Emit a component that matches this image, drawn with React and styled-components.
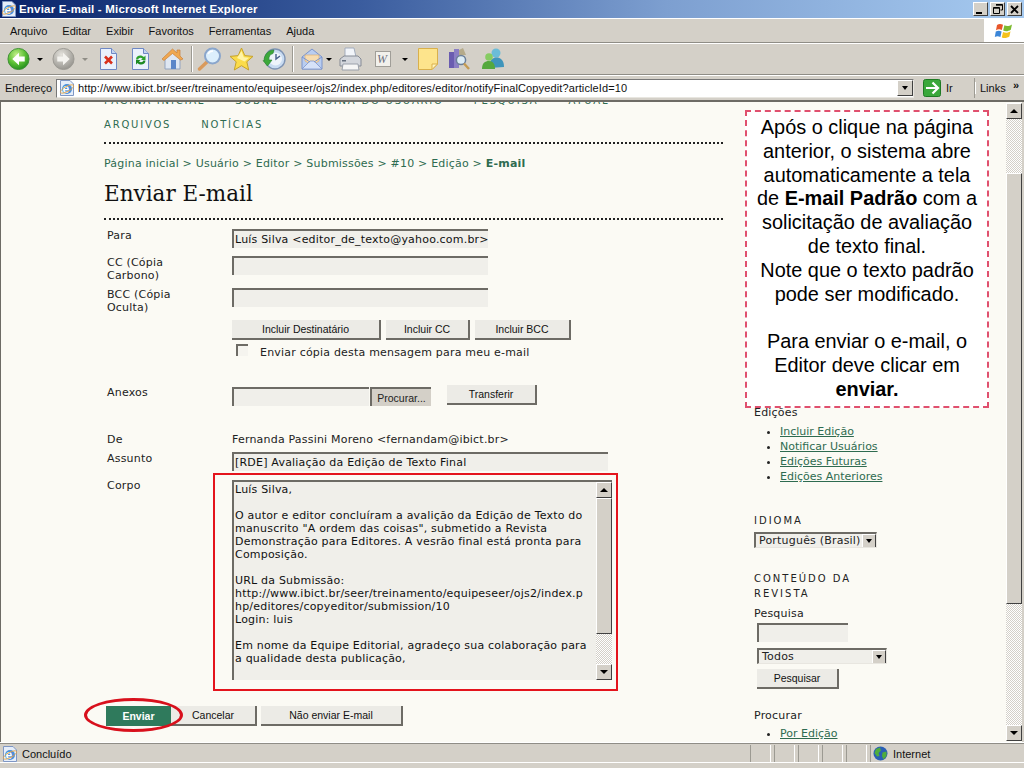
import React from "react";
import styled, { createGlobalStyle } from "styled-components";

const GlobalStyle = createGlobalStyle`
  html, body {
    margin: 0;
    padding: 0;
    overflow: hidden;
  }
`;

const chrome = "#d4d0c8";
const uiFont = `"Liberation Sans", Arial, sans-serif`;
const pageFont = `"DejaVu Sans", Verdana, sans-serif`;

const BackIcon = () => (
  <svg width="23" height="24" viewBox="0 0 24 24">
    <defs>
      <radialGradient id="bk" cx="40%" cy="30%" r="75%">
        <stop offset="0" stopColor="#c4f08c" />
        <stop offset="0.55" stopColor="#5cc034" />
        <stop offset="1" stopColor="#1f8a1c" />
      </radialGradient>
    </defs>
    <circle cx="12" cy="12" r="11" fill="url(#bk)" stroke="#3f8f34" />
    <path d="M12.5 5.5 L5.5 12 L12.5 18.5 V14.6 H18.5 V9.4 H12.5 Z" fill="#fff" />
  </svg>
);

const ForwardIcon = () => (
  <svg width="23" height="24" viewBox="0 0 24 24">
    <defs>
      <radialGradient id="fw" cx="40%" cy="30%" r="75%">
        <stop offset="0" stopColor="#e4e2dc" />
        <stop offset="1" stopColor="#93918b" />
      </radialGradient>
    </defs>
    <circle cx="12" cy="12" r="11" fill="url(#fw)" stroke="#9b9992" />
    <path d="M11.5 5.5 L18.5 12 L11.5 18.5 V14.6 H5.5 V9.4 H11.5 Z" fill="#f4f3ef" />
  </svg>
);

const StopIcon = () => (
  <svg width="19" height="24" viewBox="0 0 19 24">
    <path d="M1.5 1.5H12.5L17.5 6.5V22.5H1.5Z" fill="#eaf1fc" stroke="#6f88c4" />
    <path d="M12.5 1.5V6.5H17.5" fill="#c4d4f0" stroke="#6f88c4" />
    <path d="M6 9.5L13 16.5M13 9.5L6 16.5" stroke="#d8301c" strokeWidth="2.6" />
  </svg>
);

const RefreshIcon = () => (
  <svg width="19" height="24" viewBox="0 0 19 24">
    <path d="M1.5 1.5H12.5L17.5 6.5V22.5H1.5Z" fill="#eaf1fc" stroke="#6f88c4" />
    <path d="M12.5 1.5V6.5H17.5" fill="#c4d4f0" stroke="#6f88c4" />
    <path d="M5 12.5C5 8.5 10 7 13 10L14.5 8.5V13H10L11.5 11.5C9.5 10 7.5 11 7.2 12.5Z" fill="#2ca02c" />
    <path d="M14.5 13.5C14.5 17.5 9.5 19 6.5 16L5 17.5V13H9.5L8 14.5C10 16 12 15 12.3 13.5Z" fill="#1d8a24" />
  </svg>
);

const HomeIcon = () => (
  <svg width="23" height="24" viewBox="0 0 23 24">
    <path d="M4 11V22H19V11L11.5 5Z" fill="#dfe7f2" stroke="#93a4bf" />
    <path d="M1 12L11.5 2L16 6V3H19V9L22 12L19.5 13L11.5 6.5L3 13.5Z" fill="#f0a850" stroke="#c9803a" strokeWidth="0.7" />
    <rect x="10" y="13" width="5" height="9" fill="#5b86c8" />
  </svg>
);

const SearchIcon = () => (
  <svg width="25" height="24" viewBox="0 0 25 24">
    <path d="M11 14L2.5 22" stroke="#d99a5c" strokeWidth="3.4" strokeLinecap="round" />
    <circle cx="15.5" cy="9" r="7.5" fill="#dceffc" stroke="#8aa6cc" strokeWidth="2" />
    <path d="M11 7C12 5 14 4 16 4" stroke="#fff" strokeWidth="1.5" fill="none" />
  </svg>
);

const StarIcon = () => (
  <svg width="25" height="24" viewBox="0 0 25 24">
    <path d="M12.5 1L15.8 8.6L24 9.4L17.8 14.8L19.7 23L12.5 18.7L5.3 23L7.2 14.8L1 9.4L9.2 8.6Z" fill="#fbdc4a" stroke="#c6a22c" />
    <path d="M12.5 4L14.8 10.2L20 10.8L15.5 14.5L8 11Z" fill="#fff4a8" />
  </svg>
);

const HistoryIcon = () => (
  <svg width="24" height="24" viewBox="0 0 24 24">
    <circle cx="13" cy="12" r="10" fill="#c9dcf2" stroke="#7f94b4" strokeWidth="1.4" />
    <circle cx="13.5" cy="12" r="6.5" fill="#eef4fb" />
    <path d="M14 7V12L18 9" stroke="#46608c" strokeWidth="1.4" fill="none" />
    <path d="M2 14C2 7 7 3 12 3L11 6.5C8 7 6.5 10 7 13L10 13L5.5 19L1 13.5Z" fill="#3da83a" stroke="#24802a" strokeWidth="0.6" />
  </svg>
);

const MailIcon = () => (
  <svg width="22" height="24" viewBox="0 0 22 24">
    <path d="M1 10L11 2L21 10V22H1Z" fill="#b9cdf0" stroke="#7b94cc" />
    <path d="M4 8H18V14L11 18L4 14Z" fill="#f7dcb0" stroke="#d9a868" strokeWidth="0.6" />
    <path d="M1 22L9 14H13L21 22Z" fill="#d6e2f8" stroke="#7b94cc" strokeWidth="0.8" />
    <path d="M1 10L9 15M21 10L13 15" stroke="#7b94cc" />
  </svg>
);

const PrinterIcon = () => (
  <svg width="23" height="24" viewBox="0 0 23 24">
    <path d="M6 1H15L17 10H6Z" fill="#f2f5fa" stroke="#a3adbd" />
    <path d="M1 12L5 9H19L22 12V19H1Z" fill="#d3d6dc" stroke="#868b95" />
    <path d="M4 17H19L20 23H3Z" fill="#f6f6f6" stroke="#9aa0aa" />
    <rect x="3" y="13" width="4" height="1.5" fill="#67707e" />
  </svg>
);

const WordIcon = () => (
  <svg width="16" height="24" viewBox="0 0 16 24">
    <rect x="0.5" y="4.5" width="15" height="15" fill="#f2f1ec" stroke="#a09e98" />
    <text x="2" y="16" fontFamily="Liberation Serif" fontStyle="italic" fontSize="12" fill="#6b6f80">W</text>
  </svg>
);

const NoteIcon = () => (
  <svg width="22" height="24" viewBox="0 0 22 24">
    <path d="M1.5 1.5H20.5V17L15 22.5H1.5Z" fill="#fde48c" stroke="#d9b04c" />
    <path d="M15 22.5V17H20.5Z" fill="#fff4c0" stroke="#d9b04c" />
  </svg>
);

const ResearchIcon = () => (
  <svg width="22" height="24" viewBox="0 0 22 24">
    <rect x="1" y="5" width="5" height="16" fill="#6a5cb0" />
    <rect x="6" y="2" width="5" height="19" fill="#8b7fc4" />
    <path d="M11 3L15 1L18 8H11Z" fill="#b5aa8a" />
    <circle cx="13" cy="13" r="4.6" fill="#dcecf6" stroke="#6b7f99" strokeWidth="1.5" />
    <path d="M16 16.5L21 22" stroke="#c49a52" strokeWidth="2.4" />
  </svg>
);

const MessengerIcon = () => (
  <svg width="24" height="24" viewBox="0 0 24 24">
    <circle cx="15" cy="6" r="4.5" fill="#6bbcd8" />
    <path d="M8 21C8 13 12 10.5 15.5 10.5C19.5 10.5 23 13 23 20Z" fill="#3f95bb" />
    <circle cx="8" cy="10" r="3.8" fill="#86cc62" />
    <path d="M1 22C1 16 4 14 8 14C12 14 14 17 14 22Z" fill="#55a83e" />
  </svg>
);

const IeIcon = ({ size = 16 }) => (
  <svg width={size} height={size} viewBox="0 0 16 16">
    <path d="M1.5 0.5H11L14.5 4V15.5H1.5Z" fill="#e6eefa" stroke="#7f97c4" />
    <circle cx="8" cy="9" r="5" fill="#4a90dc" />
    <text x="3.6" y="13" fontFamily="Liberation Sans" fontWeight="700" fontSize="12" fill="#fff">e</text>
    <ellipse cx="8" cy="9" rx="7.4" ry="2.6" fill="none" stroke="#e8a33a" strokeWidth="0.8" transform="rotate(-28 8 9)" />
  </svg>
);

const FlagIcon = () => (
  <svg width="20" height="20" viewBox="0 0 20 20">
    <path d="M3 4C5 2.6 7 2.8 9 3.8L7.8 9C5.8 8 4 8 2 9.2Z" fill="#e8562a" />
    <path d="M10.4 4.2C12.8 5.4 15 5.2 18 3.4L16.8 8.8C14 10.6 11.6 10.6 9.2 9.6Z" fill="#7cba2e" />
    <path d="M1.8 10.4C4 9.4 5.6 9.4 7.6 10.4L6.4 16C4.4 15 2.8 15 0.8 16Z" fill="#3b86d8" />
    <path d="M9 11C11.4 12 14 12 16.5 10.2L15.4 15.6C12.6 17.4 10.2 17.4 7.8 16.4Z" fill="#f5c21c" />
  </svg>
);

const GoIcon = () => (
  <svg width="18" height="18" viewBox="0 0 18 18">
    <rect x="0.5" y="0.5" width="17" height="17" rx="2" fill="#3aa83a" stroke="#1f7a24" />
    <path d="M9.5 3.5L15 9L9.5 14.5M3 9H14" stroke="#fff" strokeWidth="2.2" fill="none" />
  </svg>
);

const GlobeIcon = () => (
  <svg width="15" height="15" viewBox="0 0 15 15">
    <circle cx="7.5" cy="7.5" r="7" fill="#2a5fb4" />
    <path d="M3 3L7 1.5L8 4.5L5.5 7L6.5 10L4 10.5L1.5 7Z" fill="#4fae3c" />
    <path d="M9.5 6.5L13.5 5.5L13.5 10L10.5 13.5L9 10Z" fill="#4fae3c" />
  </svg>
);

const tools = [
  { Icon: BackIcon, gap: 7 },
  { arrow: true, gap: 7 },
  { Icon: ForwardIcon, gap: 9 },
  { arrow: true, faded: true, gap: 7 },
  { Icon: StopIcon, gap: 11 },
  { Icon: RefreshIcon, gap: 13 },
  { Icon: HomeIcon, gap: 11 },
  { sep: true, gap: 7 },
  { Icon: SearchIcon, gap: 5 },
  { Icon: StarIcon, gap: 7 },
  { Icon: HistoryIcon, gap: 8 },
  { sep: true, gap: 6 },
  { Icon: MailIcon, gap: 8 },
  { arrow: true, gap: 3 },
  { Icon: PrinterIcon, gap: 7 },
  { Icon: WordIcon, gap: 13 },
  { arrow: true, gap: 11 },
  { Icon: NoteIcon, gap: 9 },
  { Icon: ResearchIcon, gap: 9 },
  { Icon: MessengerIcon, gap: 11 },
];

const menus = ["Arquivo", "Editar", "Exibir", "Favoritos", "Ferramentas", "Ajuda"];

const topNav = ["Página inicial", "Sobre", "Página do usuário", "Pesquisa", "Atual", "Arquivos", "Notícias"];

const crumbs = ["Página inicial", "Usuário", "Editor", "Submissões", "#10", "Edição"];

const issueLinks = ["Incluir Edição", "Notificar Usuários", "Edições Futuras", "Edições Anteriores"];

const mailBody = `Luís Silva,

O autor e editor concluíram a avalição da Edição de Texto do
manuscrito "A ordem das coisas", submetido a Revista
Demonstração para Editores. A vesrão final está pronta para
Composição.

URL da Submissão:
http://www.ibict.br/seer/treinamento/equipeseer/ojs2/index.p
hp/editores/copyeditor/submission/10
Login: luis

Em nome da Equipe Editorial, agradeço sua colaboração para
a qualidade desta publicação,`;

export default function App() {
  return (
    <Window>
      <GlobalStyle />
      <TitleBar>
        <IeIcon />
        <TitleText>Enviar E-mail - Microsoft Internet Explorer</TitleText>
        <WinButtons>
          <WinButton>
            <svg width="9" height="9" viewBox="0 0 9 9"><rect x="0" y="7" width="6" height="2" fill="#000" /></svg>
          </WinButton>
          <WinButton>
            <svg width="10" height="10" viewBox="0 0 10 10"><path d="M3 .5H9.5V6H7.5M.5 3.5H6.5V9.5H.5Z M3 1.2H9.5 M.5 4.2H6.5" stroke="#000" fill="none" /></svg>
          </WinButton>
          <WinButton>
            <svg width="9" height="9" viewBox="0 0 9 9"><path d="M1 1L8 8M8 1L1 8" stroke="#000" strokeWidth="1.8" /></svg>
          </WinButton>
        </WinButtons>
      </TitleBar>

      <MenuBar>
        <MenuList>
          {menus.map((m) => (
            <MenuItem key={m}>{m}</MenuItem>
          ))}
        </MenuList>
        <FlagBox>
          <FlagIcon />
        </FlagBox>
      </MenuBar>

      <Toolbar>
        {tools.map((t, i) => {
          if (t.sep) return <ToolSep key={i} $gap={t.gap} />;
          if (t.arrow) return <ToolArrow key={i} $gap={t.gap} $faded={t.faded} />;
          return (
            <ToolIcon key={i} $gap={t.gap}>
              <t.Icon />
            </ToolIcon>
          );
        })}
      </Toolbar>

      <AddressBar>
        <AddressLabel>Endereço</AddressLabel>
        <AddressField>
          <IeIcon />
          <UrlText>http://www.ibict.br/seer/treinamento/equipeseer/ojs2/index.php/editores/editor/notifyFinalCopyedit?articleId=10</UrlText>
          <ComboArrow $size={16} />
        </AddressField>
        <GoButton>
          <GoIcon />
          <span>Ir</span>
        </GoButton>
        <LinksBox>
          Links
          <LinksMore>»</LinksMore>
        </LinksBox>
      </AddressBar>

      <Viewport>
        <Page>
          <MainColumn>
            <TopNav>
              {topNav.map((n) => (
                <TopNavLink key={n}>{n}</TopNavLink>
              ))}
            </TopNav>
            <Breadcrumb>
              {crumbs.map((c) => (
                <React.Fragment key={c}>
                  <CrumbLink>{c}</CrumbLink>
                  {" > "}
                </React.Fragment>
              ))}
              <CrumbLink $current>E-mail</CrumbLink>
            </Breadcrumb>
            <PageTitle>Enviar E-mail</PageTitle>

            <Form>
              <FieldRow $h={27}>
                <FieldLabel>Para</FieldLabel>
                <TextInput $w={256}>Luís Silva &lt;editor_de_texto@yahoo.com.br&gt;</TextInput>
              </FieldRow>
              <FieldRow $h={32}>
                <FieldLabel>CC (Cópia Carbono)</FieldLabel>
                <TextInput $w={256} />
              </FieldRow>
              <FieldRow $h={32}>
                <FieldLabel>BCC (Cópia Oculta)</FieldLabel>
                <TextInput $w={256} />
              </FieldRow>
              <FieldRow $h={25}>
                <span />
                <ButtonRow>
                  <FormButton $w={149}>Incluir Destinatário</FormButton>
                  <FormButton $w={84}>Incluir CC</FormButton>
                  <FormButton $w={96}>Incluir BCC</FormButton>
                </ButtonRow>
              </FieldRow>
              <FieldRow $h={41}>
                <span />
                <CheckRow>
                  <CheckBox />
                  Enviar cópia desta mensagem para meu e-mail
                </CheckRow>
              </FieldRow>
              <FieldRow $h={47}>
                <FieldLabel>Anexos</FieldLabel>
                <ButtonRow $top={1}>
                  <TextInput $w={137} />
                  <BrowseButton>Procurar...</BrowseButton>
                  <FormButton $w={90} $lift>Transferir</FormButton>
                </ButtonRow>
              </FieldRow>
              <FieldRow $h={19}>
                <FieldLabel>De</FieldLabel>
                <PlainValue>Fernanda Passini Moreno &lt;fernandam@ibict.br&gt;</PlainValue>
              </FieldRow>
              <FieldRow $h={27}>
                <FieldLabel>Assunto</FieldLabel>
                <TextInput $w={376}>[RDE] Avaliação da Edição de Texto Final</TextInput>
              </FieldRow>
              <FieldRow $h={230}>
                <FieldLabel>Corpo</FieldLabel>
                <TextArea>
                  <TextAreaBody>{mailBody}</TextAreaBody>
                  <Scrollbar $h={198} $thumbTop={0} $thumbH={136} />
                </TextArea>
              </FieldRow>
            </Form>
            <ActionRow>
              <PrimaryButton>Enviar</PrimaryButton>
              <FormButton $w={86}>Cancelar</FormButton>
              <FormButton $w={142}>Não enviar E-mail</FormButton>
            </ActionRow>
          </MainColumn>

          <Sidebar>
            <SideText>Edições</SideText>
            <SideList>
              {issueLinks.map((l) => (
                <SideItem key={l}>
                  <SideLink>{l}</SideLink>
                </SideItem>
              ))}
            </SideList>
            <SideHeading $top={29}>Idioma</SideHeading>
            <SelectBox $w={123} $top={4}>
              Português (Brasil)
              <ComboArrow $size={14} />
            </SelectBox>
            <SideHeading $top={23}>Conteúdo da Revista</SideHeading>
            <SideText $top={6}>Pesquisa</SideText>
            <Indented>
              <TextInput $w={91} />
              <SelectBox $w={130} $top={1}>
                Todos
                <ComboArrow $size={14} />
              </SelectBox>
              <FormButton $w={82}>Pesquisar</FormButton>
            </Indented>
            <SideText $top={20}>Procurar</SideText>
            <SideList $top={4}>
              <SideItem>
                <SideLink>Por Edição</SideLink>
              </SideItem>
            </SideList>
          </Sidebar>
        </Page>
        <PageScroll>
          <Scrollbar $h={638} $thumbTop={54} $thumbH={431} />
        </PageScroll>
      </Viewport>

      <StatusBar>
        <StatusMain>
          <IeIcon />
          <span>Concluído</span>
        </StatusMain>
        <StatusCell $w={21} />
        <StatusCell $w={21} />
        <StatusCell $w={21} />
        <StatusCell $w={21} />
        <StatusCell $w={21} />
        <ZoneCell>
          <GlobeIcon />
          <span>Internet</span>
        </ZoneCell>
      </StatusBar>

      <Callout>
        Após o clique na página anterior, o sistema abre automaticamente a tela de{" "}
        <strong>E-mail Padrão</strong> com a solicitação de avaliação de texto final.
        <br />
        Note que o texto padrão pode ser modificado.
        <br />
        <br />
        Para enviar o e-mail, o Editor deve clicar em <strong>enviar.</strong>
      </Callout>
      <RedFrame />
      <RedEllipse />
    </Window>
  );
}

function Scrollbar({ $h, $thumbTop, $thumbH }) {
  return (
    <ScrollTrack $h={$h}>
      <ScrollButton $up />
      <ScrollThumb $top={$thumbTop} $h={$thumbH} />
      <ScrollButton />
    </ScrollTrack>
  );
}

const Window = styled.div`
  position: relative;
  width: 1024px;
  height: 768px;
  overflow: hidden;
  display: flex;
  flex-direction: column;
  background: ${chrome};
  font-family: ${uiFont};
  font-size: 11px;
  color: #111;
`;

const TitleBar = styled.div`
  height: 18px;
  flex: none;
  display: flex;
  align-items: center;
  padding: 0 2px 0 1px;
  gap: 2px;
  background: linear-gradient(to right, #0a246a 0%, #3a5c9e 35%, #7d9fd0 65%, #a6caf0 100%);
`;

const TitleText = styled.span`
  color: #fff;
  font-weight: 700;
  font-size: 11.5px;
  letter-spacing: 0.2px;
  flex: 1;
`;

const WinButtons = styled.div`
  display: flex;
  gap: 2px;
`;

const WinButton = styled.div`
  width: 15px;
  height: 14px;
  display: flex;
  align-items: center;
  justify-content: center;
  background: ${chrome};
  box-sizing: border-box;
  border: 1px solid;
  border-color: #fff #404040 #404040 #fff;
`;

const MenuBar = styled.div`
  height: 25px;
  flex: none;
  display: flex;
  box-sizing: border-box;
  border-top: 1px solid #fff;
  border-bottom: 1px solid #8f8d86;
`;

const MenuList = styled.div`
  flex: 1;
  display: flex;
  align-items: center;
  padding-left: 10px;
  gap: 15px;
`;

const MenuItem = styled.span`
  font-size: 11px;
`;

const FlagBox = styled.div`
  width: 40px;
  background: #fff;
  display: flex;
  align-items: center;
  justify-content: center;
`;

const Toolbar = styled.div`
  height: 32px;
  flex: none;
  display: flex;
  align-items: center;
  box-sizing: border-box;
  border-top: 1px solid #fff;
  border-bottom: 1px solid #8f8d86;
`;

const ToolIcon = styled.div`
  display: flex;
  margin-left: ${(p) => p.$gap}px;
`;

const ToolSep = styled.div`
  width: 1px;
  height: 26px;
  background: #9c9a92;
  box-shadow: 1px 0 0 #fff;
  margin-left: ${(p) => p.$gap}px;
`;

const ToolArrow = styled.div`
  width: 0;
  height: 0;
  margin-left: ${(p) => p.$gap}px;
  border-left: 3px solid transparent;
  border-right: 3px solid transparent;
  border-top: 3px solid ${(p) => (p.$faded ? "#8f8d86" : "#000")};
`;

const AddressBar = styled.div`
  height: 25px;
  flex: none;
  display: flex;
  align-items: center;
  box-sizing: border-box;
  border-top: 1px solid #fff;
  padding-left: 5px;
`;

const AddressLabel = styled.span`
  width: 51px;
  font-size: 11px;
`;

const AddressField = styled.div`
  width: 858px;
  height: 19px;
  box-sizing: border-box;
  display: flex;
  align-items: center;
  gap: 3px;
  padding-left: 2px;
  background: #fff;
  border: 1px solid;
  border-color: #777 #e8e6e0 #e8e6e0 #777;
`;

const UrlText = styled.span`
  flex: 1;
  font-size: 11px;
  letter-spacing: 0.12px;
  white-space: nowrap;
`;

const ComboArrow = styled.span`
  flex: none;
  position: relative;
  width: ${(p) => p.$size}px;
  height: ${(p) => p.$size}px;
  box-sizing: border-box;
  background: ${chrome};
  border: 1px solid;
  border-color: #fff #404040 #404040 #fff;

  &::after {
    content: "";
    position: absolute;
    left: 50%;
    top: 50%;
    margin: -2px 0 0 -3px;
    border-left: 3px solid transparent;
    border-right: 3px solid transparent;
    border-top: 4px solid #000;
  }
`;

const GoButton = styled.div`
  width: 52px;
  height: 20px;
  margin-left: 9px;
  display: flex;
  align-items: center;
  gap: 5px;
  font-size: 11px;
  box-sizing: border-box;
  border-right: 1px solid #9c9a92;
`;

const LinksBox = styled.div`
  flex: 1;
  display: flex;
  justify-content: space-between;
  padding: 0 5px;
  font-size: 11px;
  box-shadow: inset 1px 0 0 #fff;
`;

const LinksMore = styled.span`
  font-weight: 700;
  margin-top: -3px;
`;

const Viewport = styled.div`
  height: 642px;
  flex: none;
  display: flex;
  box-sizing: border-box;
  border-top: 2px solid #6d6b65;
  border-left: 1px solid #6d6b65;
  padding-right: 2px;
`;

const PageScroll = styled.div`
  flex: none;
  padding-top: 1px;
  background: #fbfaf4;
`;

const Page = styled.div`
  flex: 1;
  overflow: hidden;
  display: flex;
  background: #fbfaf4;
  font-family: ${pageFont};
  font-size: 11px;
  color: #222;
  letter-spacing: 0.2px;
`;

const MainColumn = styled.div`
  width: 619px;
  flex: none;
  margin-left: 103px;
  margin-top: -8px;
`;

const TopNav = styled.div`
  display: flex;
  flex-wrap: wrap;
  column-gap: 30px;
  row-gap: 10px;
  padding: 0 90px 10px 0;
  border-bottom: 2px dotted #222;
`;

const TopNavLink = styled.span`
  font-size: 10px;
  line-height: 14px;
  text-transform: uppercase;
  letter-spacing: 1.8px;
  color: #2e6b50;
`;

const Breadcrumb = styled.div`
  margin-top: 13px;
  line-height: 13px;
  color: #2e6b50;
`;

const CrumbLink = styled.span`
  font-weight: ${(p) => (p.$current ? 700 : 400)};
`;

const PageTitle = styled.h1`
  margin: 9px 0 0;
  padding-bottom: 9px;
  font-family: "DejaVu Serif", "Liberation Serif", serif;
  font-size: 21.5px;
  font-weight: 400;
  line-height: 30px;
  letter-spacing: 0;
  color: #111;
  border-bottom: 2px dotted #222;
`;

const Form = styled.div`
  padding-top: 6px;
`;

const FieldRow = styled.div`
  display: grid;
  grid-template-columns: 128px 1fr;
  height: ${(p) => p.$h}px;
  padding-top: 3px;
  box-sizing: border-box;
`;

const FieldLabel = styled.span`
  padding-left: 3px;
  line-height: 13px;
  width: 90px;
`;

const TextInput = styled.div`
  width: ${(p) => p.$w}px;
  height: 19px;
  flex: none;
  box-sizing: border-box;
  padding: 1px 0 0 1px;
  line-height: 15px;
  white-space: nowrap;
  overflow: hidden;
  background: #f0efea;
  border-top: 2px solid #6d6b65;
  border-left: 2px solid #6d6b65;
  color: #111;
`;

const ButtonRow = styled.div`
  display: flex;
  align-items: flex-start;
  gap: 5px;
  margin-top: ${(p) => p.$top || 0}px;
`;

const FormButton = styled.div`
  width: ${(p) => p.$w}px;
  height: 20px;
  flex: none;
  box-sizing: border-box;
  display: flex;
  align-items: center;
  justify-content: center;
  margin-top: ${(p) => (p.$lift ? "-2px" : "0")};
  background: #ecebe6;
  border-right: 2px solid #6d6b65;
  border-bottom: 2px solid #6d6b65;
  font-family: ${uiFont};
  font-size: 10.5px;
  letter-spacing: 0;
  color: #111;
`;

const BrowseButton = styled.div`
  width: 61px;
  height: 19px;
  box-sizing: border-box;
  margin-left: -4px;
  margin-right: 11px;
  display: flex;
  align-items: center;
  justify-content: center;
  background: ${chrome};
  border-top: 2px solid #6d6b65;
  border-left: 2px solid #6d6b65;
  font-family: ${uiFont};
  font-size: 10.5px;
  letter-spacing: 0;
`;

const CheckRow = styled.div`
  display: flex;
  align-items: flex-start;
  gap: 12px;
  padding-left: 4px;
  line-height: 14px;
  margin-top: 1px;
`;

const CheckBox = styled.span`
  width: 12px;
  height: 12px;
  margin-top: -2px;
  box-sizing: border-box;
  background: #f5f4ef;
  border-top: 2px solid #6d6b65;
  border-left: 2px solid #6d6b65;
`;

const PlainValue = styled.span`
  line-height: 13px;
`;

const TextArea = styled.div`
  width: 380px;
  height: 200px;
  margin-top: 1px;
  box-sizing: border-box;
  display: flex;
  background: #f0efea;
  border-top: 2px solid #6d6b65;
  border-left: 2px solid #6d6b65;
`;

const TextAreaBody = styled.div`
  flex: 1;
  padding: 1px 0 0 1px;
  white-space: pre;
  line-height: 13px;
  color: #111;
`;

const ScrollTrack = styled.div`
  position: relative;
  flex: none;
  width: 16px;
  height: ${(p) => p.$h}px;
  display: flex;
  flex-direction: column;
  justify-content: space-between;
  background: repeating-conic-gradient(#d4d0c8 0 25%, #fff 0 50%) 0 0 / 2px 2px;
`;

const ScrollButton = styled.div`
  position: relative;
  height: 16px;
  flex: none;
  box-sizing: border-box;
  background: ${chrome};
  border: 1px solid;
  border-color: #fff #404040 #404040 #fff;

  &::after {
    content: "";
    position: absolute;
    left: 3px;
    top: 5px;
    border-left: 4px solid transparent;
    border-right: 4px solid transparent;
    ${(p) => (p.$up ? "border-bottom: 4px solid #000;" : "border-top: 4px solid #000;")}
  }
`;

const ScrollThumb = styled.div`
  position: absolute;
  left: 0;
  right: 0;
  top: ${(p) => 16 + p.$top}px;
  height: ${(p) => p.$h}px;
  box-sizing: border-box;
  background: ${chrome};
  border: 1px solid;
  border-color: #fff #404040 #404040 #fff;
`;

const ActionRow = styled.div`
  display: flex;
  align-items: center;
  padding-left: 2px;
  gap: 4px;
`;

const PrimaryButton = styled.div`
  width: 65px;
  height: 20px;
  margin-right: -4px;
  display: flex;
  align-items: center;
  justify-content: center;
  background: #2f7a5c;
  color: #fff;
  font-family: ${uiFont};
  font-weight: 700;
  font-size: 10.5px;
  letter-spacing: 0;
`;

const Sidebar = styled.div`
  flex: 1;
  margin-left: 31px;
  padding-top: 304px;
`;

const SideText = styled.div`
  line-height: 13px;
  margin-top: ${(p) => p.$top || 0}px;
`;

const SideList = styled.ul`
  margin: ${(p) => p.$top || 5}px 0 0;
  padding: 0 0 0 26px;
  list-style: disc;
`;

const SideItem = styled.li`
  line-height: 15px;
`;

const SideLink = styled.span`
  color: #2e6b50;
  text-decoration: underline;
  letter-spacing: 0;
`;

const SideHeading = styled.div`
  margin-top: ${(p) => p.$top}px;
  font-size: 10px;
  line-height: 15px;
  letter-spacing: 2px;
  text-transform: uppercase;
  width: 130px;
`;

const SelectBox = styled.div`
  width: ${(p) => p.$w}px;
  height: 16px;
  box-sizing: border-box;
  margin-top: ${(p) => p.$top}px;
  padding-left: 3px;
  display: flex;
  align-items: center;
  justify-content: space-between;
  background: #f0efea;
  border: 1px solid;
  border-top: 2px solid #6d6b65;
  border-left: 2px solid #6d6b65;
  border-right-color: #e8e6e0;
  border-bottom-color: #e8e6e0;
  white-space: nowrap;
  overflow: hidden;
`;

const Indented = styled.div`
  margin: 3px 0 0 3px;
  display: flex;
  flex-direction: column;
  align-items: flex-start;
  gap: 5px;
`;

const StatusBar = styled.div`
  flex: 1;
  display: flex;
  align-items: flex-start;
  padding-top: 2px;
  box-sizing: border-box;
  border-top: 1px solid #fff;
  box-shadow: inset 0 1px 0 #8f8d86;
  background: linear-gradient(to bottom, ${chrome} 0 19px, #fff 19px 20px, ${chrome} 20px);
`;

const StatusMain = styled.div`
  width: 750px;
  height: 18px;
  flex: none;
  padding-left: 2px;
  box-sizing: border-box;
  display: flex;
  align-items: center;
  gap: 4px;
  font-size: 11px;
`;

const StatusCell = styled.div`
  width: ${(p) => p.$w}px;
  height: 17px;
  box-sizing: border-box;
  margin-right: 3px;
  border-left: 1px solid #9c9a92;
  border-right: 1px solid #fff;
`;

const ZoneCell = styled.div`
  flex: 1;
  height: 17px;
  display: flex;
  align-items: center;
  gap: 5px;
  padding-left: 2px;
  font-size: 11px;
  border-left: 1px solid #9c9a92;
`;

const Callout = styled.div`
  position: absolute;
  left: 745px;
  top: 110px;
  width: 244px;
  height: 298px;
  box-sizing: border-box;
  padding: 4px 8px 0;
  background: #fff;
  border: 2px dashed #e0506e;
  font-family: "Liberation Sans", Arial, sans-serif;
  font-size: 19.9px;
  line-height: 23.8px;
  text-align: center;
  color: #000;
`;

const RedFrame = styled.div`
  position: absolute;
  left: 213px;
  top: 473px;
  width: 405px;
  height: 218px;
  box-sizing: border-box;
  border: 2px solid #e4141c;
  pointer-events: none;
`;

const RedEllipse = styled.div`
  position: absolute;
  left: 84px;
  top: 698px;
  width: 99px;
  height: 34px;
  box-sizing: border-box;
  border: 3px solid #d8101c;
  border-radius: 50%;
  pointer-events: none;
`;
